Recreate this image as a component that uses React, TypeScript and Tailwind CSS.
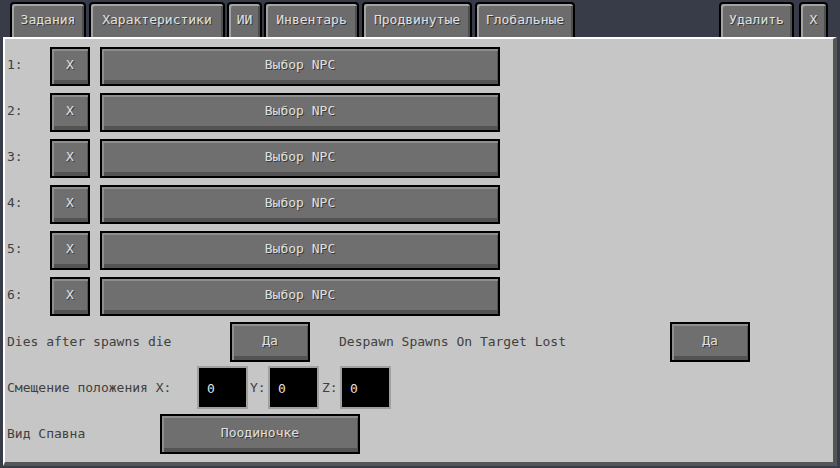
import React from "react";

const font = "font-['DejaVu_Sans_Mono','Liberation_Mono',monospace]";

function Tab({ label, className }: { label: string; className: string }) {
  return (
    <div className={`mt-[2px] flex h-[38px] shrink-0 justify-center rounded-t-[4px] border-2 border-b-0 border-black bg-[#6c6c6c] pt-[8px] shadow-[inset_2px_2px_0_#a3a3a3,inset_-2px_0_0_#4f4f4f] ${className}`}>
      <span className="text-[13px] leading-[16px] text-[#e0e0e0] [text-shadow:1px_1px_0_#383838]">{label}</span>
    </div>
  );
}

function McButton({ label, className }: { label: string; className: string }) {
  return (
    <div
      className={`flex items-center justify-center border-2 border-black bg-[#6f6f6f] pb-[3px] text-[13px] text-[#e0e0e0] shadow-[inset_2px_2px_0_#8e8e8e,inset_-1px_-4px_0_#535353] [text-shadow:1px_1px_0_#3a3a3a] ${className}`}
    >
      {label}
    </div>
  );
}

function Field({ value }: { value: string }) {
  return (
    <div className="flex h-[43px] w-[51px] items-center border-2 border-[#a0a0a0] bg-black pl-[8px] pt-[2px] text-[13px] text-[#e0e0e0]">
      {value}
    </div>
  );
}

export default function App() {
  return (
    <div className={`flex h-[468px] w-[840px] flex-col overflow-hidden bg-[#373c48] ${font}`}>
      <div className="flex h-[37px] shrink-0 overflow-hidden pl-[10px]">
        <Tab label="Задания" className="w-[76px]" />
        <Tab label="Характеристики" className="ml-[3px] w-[136px]" />
        <Tab label="ИИ" className="ml-[2px] w-[35px]" />
        <Tab label="Инвентарь" className="ml-[2px] w-[95px]" />
        <Tab label="Продвинутые" className="ml-[3px] w-[110px]" />
        <Tab label="Глобальные" className="ml-[3px] w-[100px]" />
        <Tab label="Удалить" className="ml-[144px] w-[75px]" />
        <Tab label="X" className="ml-[5px] w-[29px]" />
      </div>

      <div className="relative z-10 ml-[3px] flex h-[429px] w-[834px] flex-col border-l-2 border-t-2 border-r-4 border-b-4 border-l-white border-t-white border-r-[#555555] border-b-[#555555] bg-[#c6c6c6] pt-[8px] text-[13px] text-[#404040]">
        {[1, 2, 3, 4, 5, 6].map((n) => (
          <div key={n} className="mb-[7px] flex h-[39px] items-center">
            <div className="w-[45px] pb-[3px] pl-[2px]">{n}:</div>
            <McButton label="X" className="h-[39px] w-[40px]" />
            <McButton label="Выбор NPC" className="ml-[10px] h-[39px] w-[400px]" />
          </div>
        ))}

        <div className="mt-[-1px] flex h-[40px] items-center">
          <div className="w-[225px] pl-[2px]">Dies after spawns die</div>
          <McButton label="Да" className="h-[40px] w-[80px]" />
          <div className="ml-[29px] w-[331px]">Despawn Spawns On Target Lost</div>
          <McButton label="Да" className="h-[40px] w-[80px]" />
        </div>

        <div className="mt-[4px] flex h-[43px] items-center">
          <div className="w-[192px] pl-[2px]">Смещение положения X:</div>
          <Field value="0" />
          <div className="w-[20px] pl-[2px]">Y:</div>
          <Field value="0" />
          <div className="w-[21px] pl-[3px]">Z:</div>
          <Field value="0" />
        </div>

        <div className="mt-[5px] flex h-[40px] items-center">
          <div className="w-[155px] pl-[2px]">Вид Спавна</div>
          <McButton label="Поодиночке" className="h-[40px] w-[200px]" />
        </div>
      </div>
    </div>
  );
}
